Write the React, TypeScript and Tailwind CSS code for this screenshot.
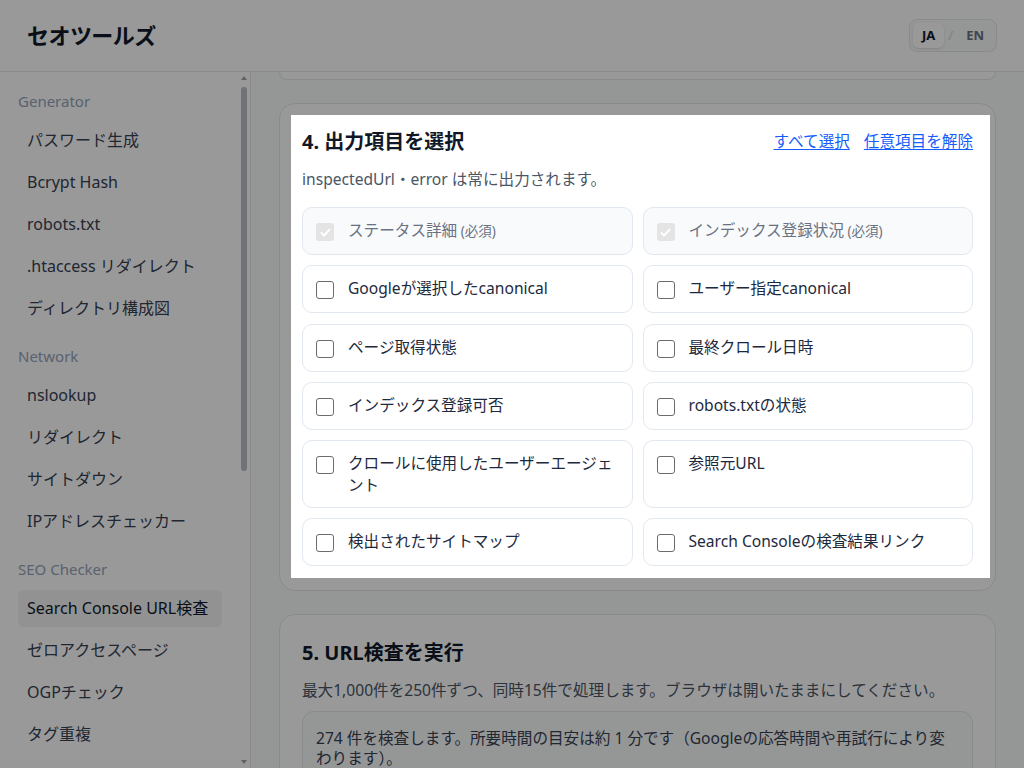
import React from "react";

type NavSection = { label: string; items: string[] };

const nav: NavSection[] = [
  { label: "Generator", items: ["パスワード生成", "Bcrypt Hash", "robots.txt", ".htaccess リダイレクト", "ディレクトリ構成図"] },
  { label: "Network", items: ["nslookup", "リダイレクト", "サイトダウン", "IPアドレスチェッカー"] },
  { label: "SEO Checker", items: ["Search Console URL検査", "ゼロアクセスページ", "OGPチェック", "タグ重複"] },
];

const options: { label: string; required?: boolean }[] = [
  { label: "ステータス詳細", required: true },
  { label: "インデックス登録状況", required: true },
  { label: "Googleが選択したcanonical" },
  { label: "ユーザー指定canonical" },
  { label: "ページ取得状態" },
  { label: "最終クロール日時" },
  { label: "インデックス登録可否" },
  { label: "robots.txtの状態" },
  { label: "クロールに使用したユーザーエージェント" },
  { label: "参照元URL" },
  { label: "検出されたサイトマップ" },
  { label: "Search Consoleの検査結果リンク" },
];

function Check({ required }: { required?: boolean }) {
  return (
    <span className="flex h-6 shrink-0 items-start pt-[4px]">
      {required ? (
        <span className="flex h-[18px] w-[18px] items-center justify-center rounded-[3px] bg-[#e4e4e4]">
          <svg viewBox="0 0 16 16" className="h-[13px] w-[13px]" fill="none" stroke="#ffffff" strokeWidth="2.4" strokeLinecap="round" strokeLinejoin="round">
            <path d="M3 8.5l3.2 3.2L13 4.5" />
          </svg>
        </span>
      ) : (
        <span className="h-[18px] w-[18px] rounded-[3px] border border-[#6b6b6b] bg-white" />
      )}
    </span>
  );
}

function FakeScrollbar() {
  return (
    <div className="flex w-[12px] shrink-0 flex-col items-center bg-white">
      <svg viewBox="0 0 6 4" className="mt-[4px] h-[4px] w-[6px]" fill="#a3a3a3">
        <path d="M3 0L6 4H0z" />
      </svg>
      <div className="mt-[7px] h-[384px] w-[6px] rounded-full bg-[#b9bec6]" />
      <div className="flex-1" />
      <svg viewBox="0 0 6 4" className="mb-[4px] h-[4px] w-[6px]" fill="#a3a3a3">
        <path d="M0 0H6L3 4z" />
      </svg>
    </div>
  );
}

export default function App() {
  return (
    <div className="flex h-[768px] flex-col overflow-hidden bg-white font-['Noto_Sans','Noto_Sans_CJK_JP',sans-serif] text-gray-800">
      <header className="flex h-[72px] shrink-0 items-center justify-between border-b border-gray-200 bg-white pl-[27px] pr-[27px]">
        <div className="text-[22px] font-bold tracking-tight text-gray-900">セオツールズ</div>
        <div className="flex items-center gap-[4px] rounded-lg border border-gray-200 bg-gray-50 p-[3px] text-[13px] font-bold leading-[17px]">
          <span className="rounded-md bg-white px-[9px] py-[4px] text-gray-900 shadow-sm">JA</span>
          <span className="font-normal text-gray-300">/</span>
          <span className="px-[9px] py-[4px] text-gray-500">EN</span>
        </div>
      </header>
      <div className="flex min-h-0 flex-1">
        <aside className="flex w-[251px] shrink-0 border-r border-gray-200 bg-white">
          <nav className="min-w-0 flex-1 overflow-hidden pl-[18px] pr-[16px] pt-[18px]">
            {nav.map((sec, i) => (
              <div key={sec.label} className={i === 0 ? "" : "mt-[18px]"}>
                <div className="mb-[10px] text-[15px] leading-[22px] text-[#94a3b8]">{sec.label}</div>
                <ul className="flex flex-col gap-[5px]">
                  {sec.items.map((it) => (
                    <li
                      key={it}
                      className={
                        "whitespace-nowrap rounded-md px-[9px] py-[7px] text-[16px] leading-[23px] " +
                        (it === "Search Console URL検査" ? "bg-gray-100 text-gray-900" : "text-gray-700")
                      }
                    >
                      {it}
                    </li>
                  ))}
                </ul>
              </div>
            ))}
          </nav>
          <FakeScrollbar />
        </aside>
        <main className="flex-1 bg-gray-50 px-[28px]">
          <div className="h-[8px] rounded-b-2xl border-x border-b border-gray-200 bg-white" />
          <section className="relative mt-[23px] rounded-2xl border border-gray-200 bg-white px-[22px] py-6">
            <div className="flex items-center justify-between">
              <h2 className="text-xl font-bold leading-7 text-gray-900">4. 出力項目を選択</h2>
              <div className="flex gap-[14px] text-[15.6px] text-blue-600">
                <span className="underline underline-offset-2">すべて選択</span>
                <span className="underline underline-offset-2">任意項目を解除</span>
              </div>
            </div>
            <p className="mt-3 text-[15.6px] leading-[22px] text-gray-600">inspectedUrl・error は常に出力されます。</p>
            <div className="mt-[17px] grid grid-cols-2 gap-x-[10px] gap-y-[10.25px]">
              {options.map((o) => (
                <label
                  key={o.label}
                  className={
                    "flex items-start gap-[14px] rounded-[10px] border border-slate-200 px-[13px] py-[11px] " +
                    (o.required ? "bg-slate-50 text-gray-500" : "bg-white text-slate-800")
                  }
                >
                  <Check required={o.required} />
                  <span className="text-[15.6px] leading-[22px]">
                    {o.label}
                    {o.required && <span className="text-[13.5px] text-gray-500"> (必須)</span>}
                  </span>
                </label>
              ))}
            </div>
            <div className="pointer-events-none absolute bottom-[12px] left-[11px] right-[5px] top-[11px] z-50 shadow-[0_0_0_3000px_rgba(0,0,0,0.4)]" />
          </section>
          <section className="mt-[23px] rounded-2xl border border-gray-200 bg-white px-[22px] py-6">
            <h2 className="text-xl font-bold leading-7 text-gray-900">5. URL検査を実行</h2>
            <p className="mt-3 text-[15.6px] leading-[22px] text-gray-600">
              最大1,000件を250件ずつ、同時15件で処理します。ブラウザは開いたままにしてください。
            </p>
            <div className="mt-[10px] rounded-xl border border-gray-200 bg-gray-50 px-[13px] py-4 text-[15.6px] leading-[20px] text-gray-700">
              274 件を検査します。所要時間の目安は約 1 分です（Googleの応答時間や再試行により変わります）。
            </div>
          </section>
        </main>
      </div>
    </div>
  );
}
